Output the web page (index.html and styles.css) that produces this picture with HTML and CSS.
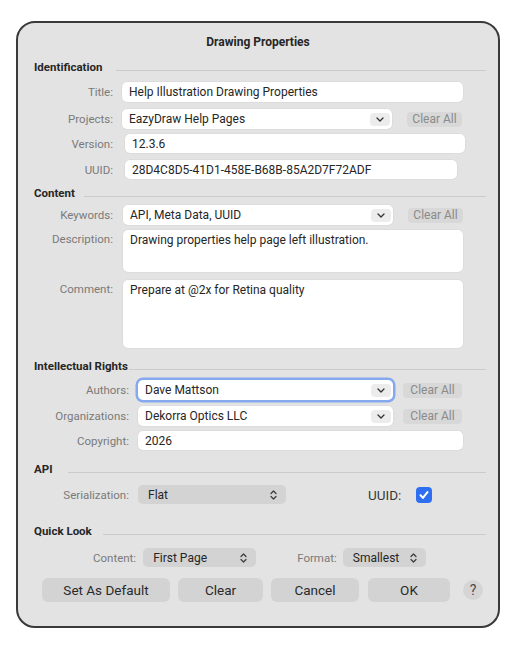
FILE: index.html
```html
<!DOCTYPE html>
<html>
<head>
<meta charset="utf-8">
<link rel="stylesheet" href="styles.css">
</head>
<body>
<div class="window">
  <div class="title">Drawing Properties</div>

  <div class="hdr hdr-ident"><span class="hdr-text">Identification</span><i class="rule"></i></div>
  <div class="row r-title ident">
    <span class="lbl">Title:</span>
    <div class="field f-title">Help Illustration Drawing Properties</div>
  </div>
  <div class="row r-projects ident">
    <span class="lbl">Projects:</span>
    <div class="combo c-projects"><span class="combo-text">EazyDraw Help Pages</span><span class="chev"><svg width="8" height="5" viewBox="0 0 8 5"><path d="M1 1l3 3 3-3" fill="none" stroke="#333" stroke-width="1.3" stroke-linecap="round" stroke-linejoin="round"/></svg></span></div>
    <div class="clear-all">Clear All</div>
  </div>
  <div class="row r-version ident">
    <span class="lbl">Version:</span>
    <div class="field f-version">12.3.6</div>
  </div>
  <div class="row r-uuid ident">
    <span class="lbl">UUID:</span>
    <div class="field f-uuid">28D4C8D5-41D1-458E-B68B-85A2D7F72ADF</div>
  </div>

  <div class="hdr hdr-content"><span class="hdr-text">Content</span><i class="rule"></i></div>
  <div class="row r-keywords ident">
    <span class="lbl">Keywords:</span>
    <div class="combo c-keywords"><span class="combo-text">API, Meta Data, UUID</span><span class="chev"><svg width="8" height="5" viewBox="0 0 8 5"><path d="M1 1l3 3 3-3" fill="none" stroke="#333" stroke-width="1.3" stroke-linecap="round" stroke-linejoin="round"/></svg></span></div>
    <div class="clear-all">Clear All</div>
  </div>
  <div class="row-top r-desc ident">
    <span class="lbl lbl-top">Description:</span>
    <div class="area a-desc">Drawing properties help page left illustration.</div>
  </div>
  <div class="row-top r-comment ident">
    <span class="lbl lbl-top">Comment:</span>
    <div class="area a-comment">Prepare at @2x for Retina quality</div>
  </div>

  <div class="hdr hdr-rights"><span class="hdr-text">Intellectual Rights</span><i class="rule"></i></div>
  <div class="row r-authors rights">
    <span class="lbl">Authors:</span>
    <div class="combo c-rights focused"><span class="combo-text">Dave Mattson</span><span class="chev"><svg width="8" height="5" viewBox="0 0 8 5"><path d="M1 1l3 3 3-3" fill="none" stroke="#333" stroke-width="1.3" stroke-linecap="round" stroke-linejoin="round"/></svg></span></div>
    <div class="clear-all">Clear All</div>
  </div>
  <div class="row r-orgs rights">
    <span class="lbl">Organizations:</span>
    <div class="combo c-rights"><span class="combo-text">Dekorra Optics LLC</span><span class="chev"><svg width="8" height="5" viewBox="0 0 8 5"><path d="M1 1l3 3 3-3" fill="none" stroke="#333" stroke-width="1.3" stroke-linecap="round" stroke-linejoin="round"/></svg></span></div>
    <div class="clear-all">Clear All</div>
  </div>
  <div class="row r-copyright rights">
    <span class="lbl">Copyright:</span>
    <div class="field f-copyright">2026</div>
  </div>

  <div class="hdr hdr-api"><span class="hdr-text">API</span><i class="rule"></i></div>
  <div class="row r-serial rights">
    <span class="lbl">Serialization:</span>
    <div class="popup p-serial"><span>Flat</span><svg class="updown" width="7" height="10" viewBox="0 0 7 10"><path d="M1 3.5l2.5-2.5 2.5 2.5M1 6.5l2.5 2.5 2.5-2.5" fill="none" stroke="#3a3a3a" stroke-width="1.2" stroke-linecap="round" stroke-linejoin="round"/></svg></div>
    <span class="uuid-lbl">UUID:</span>
    <span class="checkbox"><svg width="12" height="12" viewBox="0 0 12 12"><path d="M2.5 6.3l2.4 2.6 4.6-5.8" fill="none" stroke="#fff" stroke-width="2" stroke-linecap="round" stroke-linejoin="round"/></svg></span>
  </div>

  <div class="hdr hdr-ql"><span class="hdr-text">Quick Look</span><i class="rule"></i></div>
  <div class="row r-ql">
    <span class="ql-lbl">Content:</span>
    <div class="popup p-content"><span>First Page</span><svg class="updown" width="7" height="10" viewBox="0 0 7 10"><path d="M1 3.5l2.5-2.5 2.5 2.5M1 6.5l2.5 2.5 2.5-2.5" fill="none" stroke="#3a3a3a" stroke-width="1.2" stroke-linecap="round" stroke-linejoin="round"/></svg></div>
    <span class="ql-lbl ql-format">Format:</span>
    <div class="popup p-format"><span>Smallest</span><svg class="updown" width="7" height="10" viewBox="0 0 7 10"><path d="M1 3.5l2.5-2.5 2.5 2.5M1 6.5l2.5 2.5 2.5-2.5" fill="none" stroke="#3a3a3a" stroke-width="1.2" stroke-linecap="round" stroke-linejoin="round"/></svg></div>
  </div>

  <div class="buttons">
    <div class="btn b-default">Set As Default</div>
    <div class="btn b-clear">Clear</div>
    <div class="btn b-cancel">Cancel</div>
    <div class="btn b-ok">OK</div>
    <div class="help">?</div>
  </div>
</div>
</body>
</html>
```

FILE: styles.css
```css
html, body {
  margin: 0;
  padding: 0;
  background: #ffffff;
}
body {
  font-family: Roboto, Inter, "Liberation Sans", sans-serif;
  color: #262626;
}
.window {
  box-sizing: border-box;
  margin: 21px 0 0 16px;
  width: 484px;
  height: 607px;
  border: 2px solid #3a3a3a;
  border-radius: 19px;
  background: #e3e3e3;
  display: flex;
  flex-direction: column;
}
.title {
  margin-top: 11px;
  height: 16px;
  line-height: 16px;
  text-align: center;
  font-weight: 700;
  font-size: 12px;
  color: #262626;
}

/* section headers */
.hdr {
  display: flex;
  align-items: center;
  height: 16px;
  padding-left: 16px;
  margin-right: 12px;
}
.hdr-text {
  font-weight: 700;
  font-size: 11.5px;
  color: #262626;
}
.rule {
  flex: 1;
  height: 1px;
  margin-top: 6px;
  background: #cbcbcb;
}
.hdr-ident { margin-top: 9px; }
.hdr-ident .rule { margin-left: 14px; }
.hdr-content { margin-top: 6px; }
.hdr-content .rule { margin-left: 9px; }
.hdr-rights { margin-top: 10px; }
.hdr-rights .rule { margin-left: 1px; }
.hdr-api { margin-top: 11px; }
.hdr-api .rule { margin-left: 15px; }
.hdr-ql { margin-top: 19px; }
.hdr-ql .rule { margin-left: 11px; }

/* rows */
.row, .row-top {
  display: flex;
  align-items: center;
  height: 20px;
}
.row-top { align-items: flex-start; }
.lbl {
  flex: none;
  text-align: right;
  font-size: 11.5px;
  color: #7a7a7a;
}
.ident .lbl { width: 95px; }
.rights .lbl { width: 111px; }
.lbl-top { margin-top: 2px; }

.r-title { margin-top: 7px; }
.r-projects { margin-top: 7px; }
.r-version { margin-top: 5px; height: 19px; }
.r-uuid { margin-top: 7px; height: 19px; }
.r-keywords { margin-top: 4px; }
.r-desc { margin-top: 5px; height: 42px; }
.r-comment { margin-top: 8px; height: 68px; }
.r-authors { margin-top: 6px; }
.r-orgs { margin-top: 6px; }
.r-copyright { margin-top: 5px; height: 19px; }
.r-serial { margin-top: 8px; height: 19px; }
.r-ql { margin-top: 9px; height: 19px; }

.field, .combo, .area {
  box-sizing: border-box;
  background: #ffffff;
  border-radius: 5px;
  font-size: 12px;
  color: #262626;
  padding-left: 7px;
  box-shadow: 0 0 0 0.5px rgba(0, 0, 0, 0.06);
}
.field {
  height: 100%;
  display: flex;
  align-items: center;
}
.f-title { margin-left: 9px; width: 341px; }
.f-version { margin-left: 12px; width: 340px; }
.f-uuid { margin-left: 12px; width: 332px; }
.f-copyright { margin-left: 9px; width: 325px; }

.combo {
  height: 100%;
  display: flex;
  align-items: center;
  justify-content: space-between;
  padding-right: 2px;
}
.c-projects { margin-left: 9px; width: 270px; }
.c-keywords { margin-left: 10px; width: 270px; }
.c-rights { margin-left: 9px; width: 255px; }
.focused {
  box-shadow: 0 0 0 2.5px #86a8ee;
}
.chev {
  width: 20px;
  height: 13px;
  border-radius: 4px;
  background: #ececec;
  display: flex;
  align-items: center;
  justify-content: center;
}
.clear-all {
  box-sizing: border-box;
  width: 55px;
  height: 15px;
  line-height: 15px;
  border-radius: 4px;
  background: #d8d8d8;
  color: #8a8a8a;
  font-size: 12px;
  text-align: center;
}
.r-projects .clear-all, .r-keywords .clear-all { margin-left: 15px; }
.rights .clear-all { margin-left: 10px; width: 59px; }

.area {
  padding-top: 2px;
  line-height: 16px;
  height: 100%;
}
.a-desc { margin-left: 10px; width: 340px; }
.a-comment { margin-left: 10px; width: 340px; }

/* popups */
.popup {
  box-sizing: border-box;
  height: 100%;
  display: flex;
  align-items: center;
  justify-content: space-between;
  background: #d3d3d3;
  border-radius: 5px;
  font-size: 12px;
  color: #262626;
  padding: 0 9px 0 10px;
}
.p-serial { margin-left: 9px; width: 148px; }
.uuid-lbl {
  margin-left: 82px;
  font-size: 13.5px;
  color: #3a3a3a;
}
.checkbox {
  margin-left: 15px;
  width: 16px;
  height: 16px;
  border-radius: 4px;
  background: #2d6ff0;
  display: flex;
  align-items: center;
  justify-content: center;
}

.r-ql { padding-left: 75px; }
.ql-lbl {
  font-size: 11.5px;
  color: #7a7a7a;
}
.p-content { margin-left: 7px; width: 113px; }
.ql-format { margin-left: 41px; }
.p-format { margin-left: 6px; width: 83px; }

/* buttons */
.buttons {
  margin-top: 11px;
  height: 24px;
  display: flex;
  align-items: center;
  padding-left: 24px;
}
.btn {
  box-sizing: border-box;
  height: 24px;
  line-height: 24px;
  border-radius: 6px;
  background: #d3d3d3;
  font-size: 13.5px;
  color: #2a2a2a;
  text-align: center;
}
.b-default { width: 128px; }
.b-clear { margin-left: 8px; width: 85px; }
.b-cancel { margin-left: 8px; width: 88px; }
.b-ok { margin-left: 9px; width: 82px; }
.help {
  margin-left: 13px;
  width: 20px;
  height: 20px;
  border-radius: 50%;
  background: #d5d5d5;
  color: #4a4a4a;
  font-size: 14px;
  line-height: 20px;
  text-align: center;
}
```
